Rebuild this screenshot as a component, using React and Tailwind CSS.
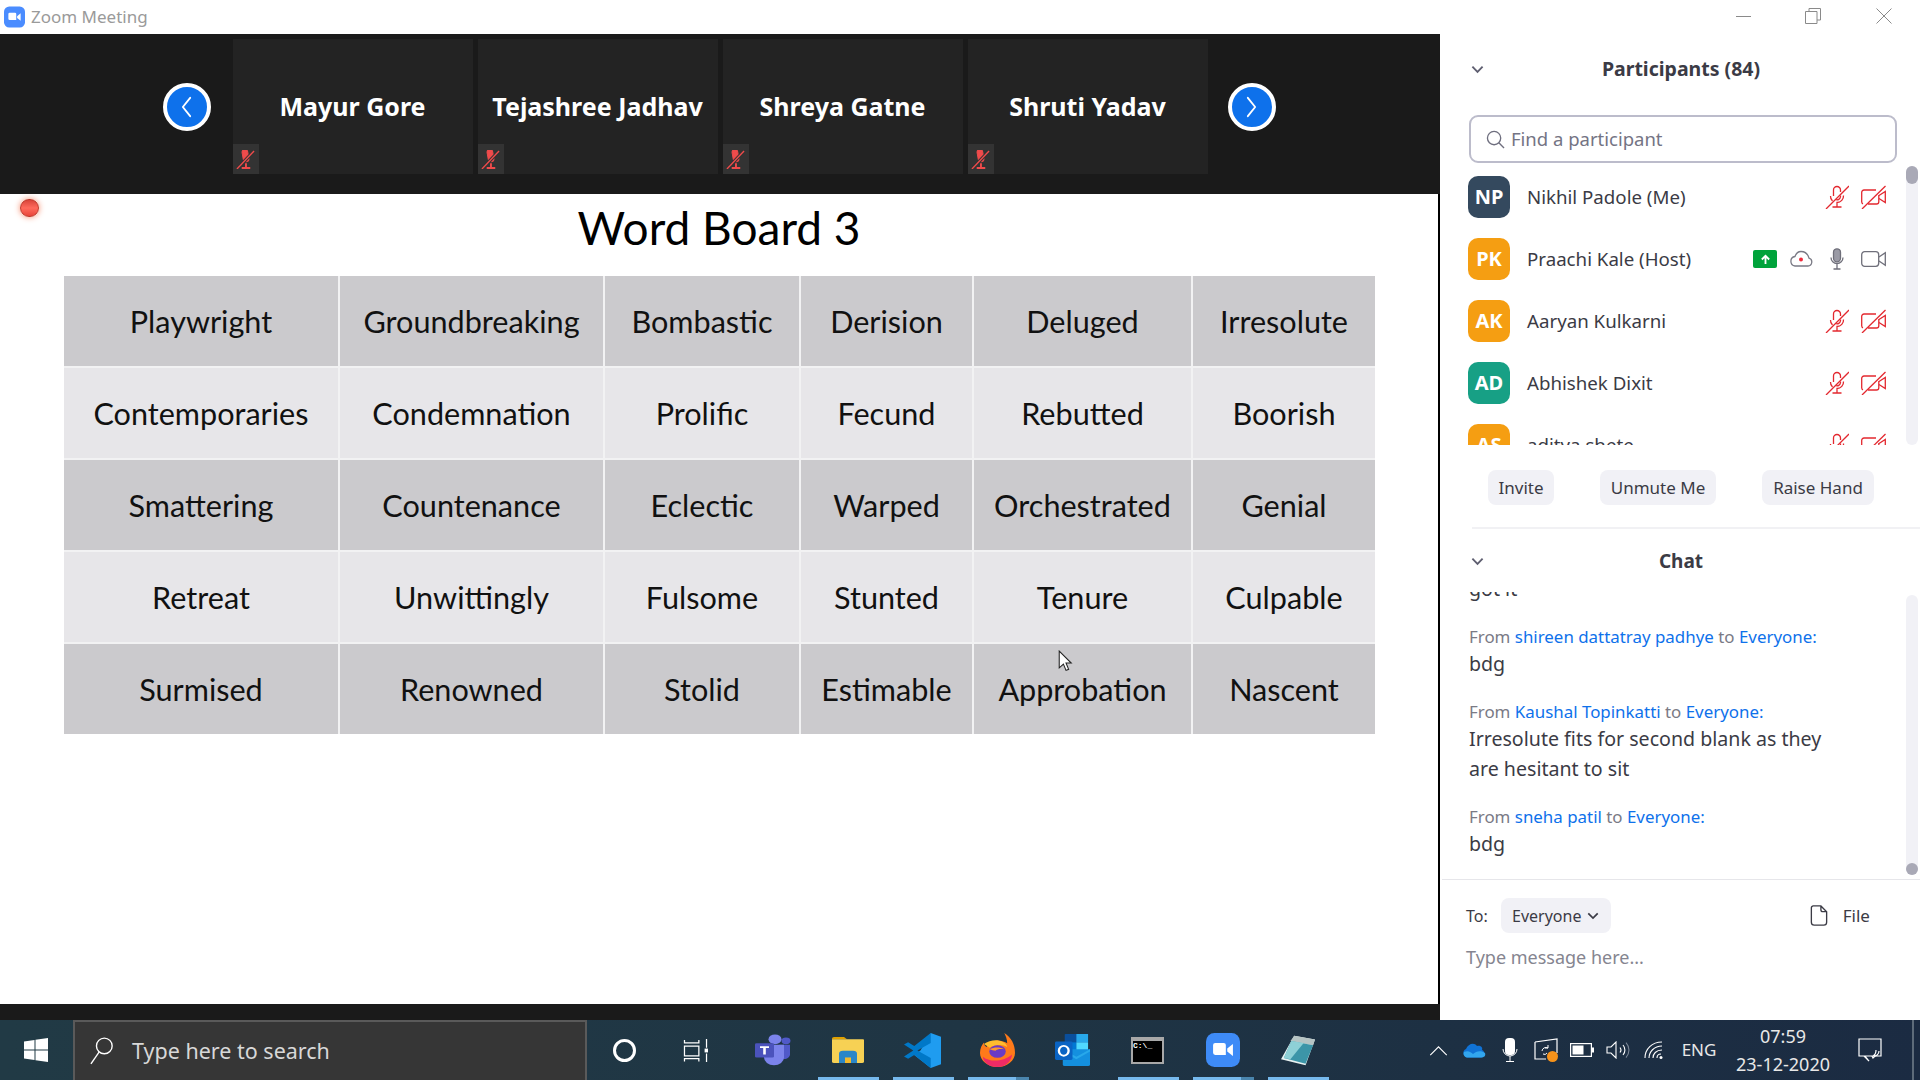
import React from 'react';

const words = [
    ['Playwright', 'Groundbreaking', 'Bombastic', 'Derision', 'Deluged', 'Irresolute'],
    ['Contemporaries', 'Condemnation', 'Prolific', 'Fecund', 'Rebutted', 'Boorish'],
    ['Smattering', 'Countenance', 'Eclectic', 'Warped', 'Orchestrated', 'Genial'],
    ['Retreat', 'Unwittingly', 'Fulsome', 'Stunted', 'Tenure', 'Culpable'],
    ['Surmised', 'Renowned', 'Stolid', 'Estimable', 'Approbation', 'Nascent'],
];

const tiles = ['Mayur Gore', 'Tejashree Jadhav', 'Shreya Gatne', 'Shruti Yadav'];

const people = [
    { initials: 'NP', name: 'Nikhil Padole (Me)', color: 'bg-[#34495e]' },
    { initials: 'PK', name: 'Praachi Kale (Host)', color: 'bg-[#f59e12]', host: true },
    { initials: 'AK', name: 'Aaryan Kulkarni', color: 'bg-[#f59e12]' },
    { initials: 'AD', name: 'Abhishek Dixit', color: 'bg-[#17a085]' },
    { initials: 'AS', name: 'aditya shete', color: 'bg-[#f59e12]' },
];

const messages = [
    { from: 'shireen dattatray padhye', lines: ['bdg'] },
    { from: 'Kaushal Topinkatti', lines: ['Irresolute fits for second blank as they', 'are hesitant to sit'] },
    { from: 'sneha patil', lines: ['bdg'] },
];

function MicOff({ className }) {
    return (
        <svg viewBox="0 0 24 24" className={className} fill="none" stroke="currentColor" strokeWidth="1.3">
            <path d="M8.5 11V5a3.5 3.5 0 0 1 7 0v2M15.5 10.5v1a3.5 3.5 0 0 1-5 3" />
            <path d="M5.5 11a6.5 6.5 0 0 0 2 5M18.5 10.5a6.5 6.5 0 0 1-6.5 7v4M7.5 22h9" />
            <path d="M1 24 24 1" />
        </svg>
    );
}

function VideoOff({ className }) {
    return (
        <svg viewBox="0 0 25 24" className={className} fill="none" stroke="currentColor" strokeWidth="1.3">
            <path d="M15 5H3a2.3 2.3 0 0 0-2.3 2.3v9.4c0 1 .5 1.8 1.3 2.1M7 19h8.5a2.3 2.3 0 0 0 2.300-2.300V10" />
            <path d="m18 10.5 6.300-4v11l-6.300-4" />
            <path d="M1 24 24.500 1" />
        </svg>
    );
}

function TileMute() {
    return (
        <svg viewBox="0 0 20 20" className="w-[19px] h-[19px] text-[#ef4b4b]" fill="none" stroke="currentColor">
            <path d="M7 2.5a3 3 0 0 1 6 0v7a3 3 0 0 1-6 0z" fill="currentColor" strokeWidth="1" transform="rotate(-10 10 6)" />
            <path d="M10.500 14v5M6 19h9" strokeWidth="2" />
            <path d="M3 18 19 1" stroke="#333333" strokeWidth="3.500" />
            <path d="M1 20 19 1" strokeWidth="1.400" />
        </svg>
    );
}

function ZoomGlyph({ className, bg }) {
    return (
        <svg viewBox="0 0 24 24" className={className}>
            <rect x="0" y="0" width="24" height="24" rx="6" fill={bg} />
            <path d="M5 8.500A1.500 1.500 0 0 1 6.500 7h6A1.500 1.500 0 0 1 14 8.500v7h-7.500A1.500 1.500 0 0 1 5 14z" fill="#fff" />
            <path d="m15 11 4-3.300v8.600L15 13z" fill="#fff" />
        </svg>
    );
}

function Chevron({ className }) {
    return (
        <svg viewBox="0 0 14 9" className={className} fill="none" stroke="currentColor" strokeWidth="2">
            <path d="m1.500 1.500 5.500 5.500 5.500-5.500" />
        </svg>
    );
}

function NavArrow({ left }) {
    return (
        <div className="w-[48px] h-[48px] rounded-full bg-[#0e71eb] border-[4px] border-white flex items-center justify-center">
            <svg viewBox="0 0 14 24" className="w-[13px] h-[22px]" fill="none" stroke="#fff" strokeWidth="2" strokeLinecap="round" strokeLinejoin="round">
                <path d={left ? 'M11 2 3 12l8 10' : 'M3 2l8 10-8 10'} />
            </svg>
        </div>
    );
}

function Person({ p }) {
    return (
        <div className="flex items-center h-[62px] shrink-0 pl-[28px] pr-[20px]">
            <div className={`w-[42px] h-[42px] rounded-[10px] ${p.color} flex items-center justify-center text-white font-bold text-[20px]`}>
                {p.initials}
            </div>
            <span className="ml-[17px] text-[18.700px] text-[#3b3b45]">{p.name}</span>
            {p.host ? (
                <div className="ml-auto flex items-center">
                    <div className="w-[24px] h-[18px] bg-[#00a33b] rounded-[2px] flex items-center justify-center">
                        <svg viewBox="0 0 12 12" className="w-[11px] h-[11px]" fill="none" stroke="#fff" strokeWidth="2">
                            <path d="M6 11V2M2 6l4-4 4 4" />
                        </svg>
                    </div>
                    <svg viewBox="0 0 24 18" className="ml-[12px] w-[24px] h-[18px]" fill="none" stroke="#7a7a85" strokeWidth="1.3">
                        <path d="M6 16h13a4 4 0 0 0 1-7.800C19 4.500 16 1.500 12 1.500 9 1.500 7 3.500 6 6.500a4.800 4.800 0 0 0 0 9.500z" />
                        <circle cx="12" cy="9.500" r="2" fill="#f02b3c" stroke="none" />
                    </svg>
                    <svg viewBox="0 0 14 22" className="ml-[17px] w-[14px] h-[22px]" fill="none" stroke="#6f6f7a" strokeWidth="1.3">
                        <rect x="3.500" y="0.800" width="7" height="13" rx="3.500" fill="#9a9aa5" />
                        <path d="M1 9.500a6 6 0 0 0 12 0M7 15.500v5M3.500 21h7" />
                    </svg>
                    <svg viewBox="0 0 25 16" className="ml-[17px] w-[25px] h-[16px]" fill="none" stroke="#6f6f7a" strokeWidth="1.3">
                        <rect x="0.700" y="0.700" width="17" height="14.600" rx="3" />
                        <path d="m18 6 6.300-4.300v12.600L18 10" />
                    </svg>
                </div>
            ) : (
                <div className="ml-auto flex items-center text-[#e3282f]">
                    <MicOff className="w-[24px] h-[24px]" />
                    <VideoOff className="ml-[12px] w-[25px] h-[24px]" />
                </div>
            )}
        </div>
    );
}

function Message({ from, lines }) {
    return (
        <div>
            <div className="text-[16.900px] leading-[24px] text-[#7a7a85]">
                From <span className="text-[#0e71eb]">{from}</span> to <span className="text-[#0e71eb]">Everyone:</span>
            </div>
            {lines.map((l) => (
                <div key={l} className="text-[19.600px] leading-[30px] text-[#3b3b45]">{l}</div>
            ))}
        </div>
    );
}

function Slot({ children, bar, stacked, className = 'w-[75px]' }) {
    return (
        <div className={`relative h-full flex items-center justify-center shrink-0 ${className}`}>
            {children}
            {bar && (
                <div className="absolute bottom-0 left-[8px] h-[3px] w-[61px] flex">
                    <div className="flex-1 bg-[#76b9ed]"></div>
                    {stacked && <div className="w-[13px] bg-[#4a85ad]"></div>}
                </div>
            )}
        </div>
    );
}

function Taskbar() {
    return (
        <div className="h-[60px] shrink-0 flex items-stretch bg-gradient-to-r from-[#213a45] via-[#1f3544] to-[#1b2b42] text-white font-['Noto_Sans']">
            <div className="w-[73px] flex items-center justify-center pr-[2px]">
                <svg viewBox="0 0 24 24" className="w-[24px] h-[24px]" fill="#fff">
                    <path d="M0 3.500 10.500 2v9.500H0zM11.500 1.800 24 0v11.500H11.500zM0 12.500h10.500V22L0 20.500zM11.500 12.500H24V24l-12.500-1.800z" />
                </svg>
            </div>
            <div className="w-[514px] bg-[#363636] border-2 border-[#5a5a5a] border-b-0 flex items-center">
                <svg viewBox="0 0 26 32" className="ml-[15px] w-[24px] h-[30px]" fill="none" stroke="#fff" strokeWidth="1.5">
                    <circle cx="15.500" cy="10.500" r="8.500" />
                    <path d="M10 17 1 30" />
                </svg>
                <span className="ml-[18px] mt-[1px] text-[21.500px] text-[#d8d8d8]">Type here to search</span>
            </div>

            <Slot>
                <div className="w-[23px] h-[23px] rounded-full border-[3px] border-white"></div>
            </Slot>
            <Slot className="w-[66px]">
                <svg viewBox="0 0 25 24" className="w-[25px] h-[23px]" fill="none" stroke="#fff" strokeWidth="1.3">
                    <path d="M1 1v3h15V1M1 7.500h15v10H1zM1 23.500v-3h15v3M24 0v9M24 15v9" />
                    <rect x="22" y="10" width="4" height="4" fill="#fff" stroke="none" />
                </svg>
            </Slot>
            <Slot className="w-[75px] ml-[7px]">
                <svg viewBox="0 0 36 42" preserveAspectRatio="none" className="w-[36px] h-[32px]">
                    <circle cx="20" cy="7" r="6.500" fill="#7b83eb" />
                    <circle cx="31" cy="9" r="4.500" fill="#5059c9" />
                    <path d="M24 14h11v13a6 6 0 0 1-9 5z" fill="#5059c9" />
                    <path d="M9 14h20v17a10 10 0 0 1-20 0z" fill="#7b83eb" />
                    <rect x="0" y="12" width="19" height="19" rx="1.500" fill="#4b53bc" />
                    <path d="M5 16h9v2.500h-3.200V27H8.200v-8.500H5z" fill="#fff" />
                </svg>
            </Slot>
            <Slot bar>
                <svg viewBox="0 0 32 34" preserveAspectRatio="none" className="w-[32px] h-[26px]">
                    <path d="M0 2a2 2 0 0 1 2-2h10l3 3h-15z" fill="#e0a100" />
                    <path d="M0 3h31a1 1 0 0 1 1 1v28a2 2 0 0 1-2 2H2a2 2 0 0 1-2-2z" fill="#f7d154" />
                    <path d="M7 34V22a4 4 0 0 1 4-4h10a4 4 0 0 1 4 4v12h-6v-7h-6v7z" fill="#2a86c8" />
                    <rect x="13" y="27" width="6" height="7" fill="#f2b92c" />
                </svg>
            </Slot>
            <Slot bar>
                <svg viewBox="0 0 36 46" preserveAspectRatio="none" className="w-[37px] h-[35px]">
                    <path d="M26 0 36 5v36l-10 5-16-17 6-6z" fill="#1f9cf0" />
                    <path d="M26 0v13L13 23l13 10v13L10 29 4 34 0 31l9-8-9-8 4-3 6 5z" fill="#0078c8" />
                </svg>
            </Slot>
            <Slot bar stacked>
                <svg viewBox="0 0 36 46" preserveAspectRatio="none" className="w-[35px] h-[34px]">
                    <path d="M18 46C8 46 0 37 0 27c0-6 2-11 4-14 0 3 1 5 3 6 1-5 5-9 11-9 4 0 8 2 10 4 0-6-2-11-3-14 7 6 11 15 11 27 0 10-8 19-18 19z" fill="#ff7a1a" />
                    <path d="M18 46C9 46 3 39 3 32c6 7 20 8 30-3-1 10-7 17-15 17z" fill="#ef2b66" />
                    <path d="M4 15c4-4 10-6 15-5 5 1 9 5 9 9-4-4-13-4-18 1z" fill="#ffbd2e" />
                    <circle cx="18" cy="25" r="8.500" fill="#6a3bc4" />
                    <path d="M10 22c4-3 11-3 15 0-4-1-8 0-9 2-2 0-4-1-6-2z" fill="#ff9a2e" />
                </svg>
            </Slot>
            <Slot>
                <svg viewBox="0 0 36 42" preserveAspectRatio="none" className="w-[35px] h-[32px]">
                    <rect x="10" y="0" width="24" height="22" rx="1" fill="#0a4f9c" />
                    <rect x="22" y="0" width="12" height="11" fill="#28a8ea" />
                    <rect x="10" y="11" width="12" height="11" fill="#0078d4" />
                    <rect x="22" y="11" width="12" height="11" fill="#50d9ff" />
                    <path d="M8 20h28v20a2 2 0 0 1-2 2H10a2 2 0 0 1-2-2z" fill="#1490df" />
                    <path d="M8 20l14 10 14-10v3L22 33 8 23z" fill="#28a8ea" />
                    <rect x="0" y="10" width="18" height="24" rx="1.500" fill="#0a64c4" />
                    <ellipse cx="9" cy="22" rx="5" ry="6.500" fill="none" stroke="#fff" strokeWidth="2.400" />
                </svg>
            </Slot>
            <Slot bar>
                <div className="w-[33px] h-[27px] bg-black border-2 border-[#a8a8a8] border-t-[4px] overflow-hidden">
                    <div className="text-[8px] leading-[9px] font-bold text-white font-['Liberation_Mono']">C:\_</div>
                </div>
            </Slot>
            <Slot bar stacked>
                <ZoomGlyph className="w-[34px] h-[34px]" bg="#3e8bf7" />
            </Slot>
            <Slot bar>
                <svg viewBox="0 0 36 42" preserveAspectRatio="none" className="w-[34px] h-[31px]">
                    <path d="M14 1 36 6 26 41 0 33z" fill="#e8f2f2" />
                    <path d="M14 1 36 6 34 14 10 8z" fill="#b6c4c4" />
                    <path d="M11 8 34 14 26 39 3 31z" fill="#3c95a8" />
                    <path d="M11 8 24 11 10 33 3 31z" fill="#8ed0d6" />
                </svg>
            </Slot>

            <div className="ml-auto flex items-stretch">
                <Slot className="w-[36px]">
                    <svg viewBox="0 0 20 12" className="w-[19px] h-[11px]" fill="none" stroke="#fff" strokeWidth="1.2">
                        <path d="m1 11 9-9 9 9" />
                    </svg>
                </Slot>
                <Slot className="w-[36px]">
                    <svg viewBox="0 0 24 16" className="w-[24px] h-[16px]">
                        <path d="M5 15.500A4.500 4.500 0 0 1 4 7C6 2 12 0 15 4c4-1 6 2 5 4 3 1 4 7-1 7.500z" fill="#1073d6" />
                        <path d="M5 15.500C2 15 1 12 2 10c4-2 7 0 9 2 3-3 8-4 12-1 1 3-1 4.500-4 4.500z" fill="#32a6ee" />
                    </svg>
                </Slot>
                <Slot className="w-[36px]">
                    <svg viewBox="0 0 16 24" className="w-[16px] h-[24px]" fill="none" stroke="#fff" strokeWidth="1">
                        <rect x="3" y="0" width="10" height="17" rx="4" fill="#fff" stroke="none" />
                        <path d="M1 11a7 7 0 0 0 14 0M8 18v5M4 23.500h8" />
                    </svg>
                </Slot>
                <Slot className="w-[36px]">
                    <svg viewBox="0 0 24 24" className="w-[24px] h-[24px]">
                        <path d="M1 4 23 1v14M1 4v17h11" fill="none" stroke="#fff" strokeWidth="1.2" />
                        <path d="M8 13a4 4 0 0 1 6-3M14 7v3h-3M13 15a3 3 0 0 1-4 1" fill="none" stroke="#fff" strokeWidth="1" />
                        <circle cx="18.500" cy="18.500" r="5.500" fill="#f7931a" />
                    </svg>
                </Slot>
                <Slot className="w-[36px]">
                    <svg viewBox="0 0 24 14" className="w-[24px] h-[14px]">
                        <rect x="0.600" y="0.600" width="20.800" height="12.800" fill="none" stroke="#fff" strokeWidth="1.2" />
                        <rect x="2.500" y="2.500" width="11" height="9" fill="#fff" />
                        <rect x="22" y="4.500" width="2" height="5" fill="#fff" />
                    </svg>
                </Slot>
                <Slot className="w-[36px]">
                    <svg viewBox="0 0 24 18" className="w-[24px] h-[18px]" fill="none" stroke="#fff" strokeWidth="1.1">
                        <path d="M1 6v6h4l5 5V1L5 6z" />
                        <path d="M14 6.500a4 4 0 0 1 0 5M17 4a7.500 7.500 0 0 1 0 10" />
                        <path d="M20 1.500a11 11 0 0 1 0 15" stroke="#7a8595" />
                    </svg>
                </Slot>
                <Slot className="w-[36px]">
                    <svg viewBox="0 0 20 18" className="w-[20px] h-[18px]" fill="none" stroke="#fff" strokeWidth="1.1">
                        <path d="M1 17C1 8 8 1 18 1M5 17c0-6 5-12 13-12M9 17c0-4 3-8 9-8M13 17c0-2 1-4 4-4" />
                        <circle cx="17" cy="16.500" r="1.500" fill="#fff" stroke="none" />
                    </svg>
                </Slot>
                <div className="w-[54px] flex items-center justify-center text-[17px] text-[#e8e8e8]">ENG</div>
                <div className="w-[114px] flex flex-col items-center justify-center text-[18px] leading-[28px] text-[#e8e8e8]">
                    <div>07:59</div>
                    <div>23-12-2020</div>
                </div>
                <div className="w-[60px] flex items-center justify-center">
                    <svg viewBox="0 0 24 24" className="w-[24px] h-[24px]" fill="none" stroke="#fff" strokeWidth="1.2">
                        <path d="M1 1h22v17h-6l-1 1-1 1-1-2H7l4 5-5-5H1z" />
                        <path d="M21 13a5 5 0 0 1-6 5c2-1 3-3 3-6" />
                    </svg>
                </div>
                <div className="w-[2px] ml-[12px] mr-[6px] bg-[#5d6b7a]"></div>
            </div>
        </div>
    );
}

export default function App() {
    return (
        <div className="w-[1920px] h-[1080px] flex flex-col overflow-hidden bg-white font-['Noto_Sans']">
            <div className="flex flex-1 min-h-0">
                {/* meeting side */}
                <div className="w-[1440px] flex flex-col">
                    <div className="h-[34px] flex items-center pl-[4px]">
                        <ZoomGlyph className="w-[21px] h-[22px]" bg="#4a8cff" />
                        <span className="ml-[6px] text-[17px] text-[#9a9a9a]">Zoom Meeting</span>
                    </div>
                    <div className="h-[160px] bg-[#1a1a1a] pt-[5px]">
                        <div className="h-[135px] flex items-center justify-center pr-[2px]">
                            <NavArrow left />
                            <div className="flex gap-[5px] ml-[22px] mr-[20px] h-full">
                                {tiles.map((t) => (
                                    <div key={t} className="relative w-[240px] h-full bg-[#232323] flex items-center justify-center">
                                        <span className="text-white font-bold text-[25px]">{t}</span>
                                        <div className="absolute left-0 bottom-0 w-[26px] h-[30px] bg-[#333333] flex items-center justify-center">
                                            <TileMute />
                                        </div>
                                    </div>
                                ))}
                            </div>
                            <NavArrow />
                        </div>
                    </div>
                    <div className="relative flex-1 border-r-2 border-black flex flex-col">
                        <div className="absolute left-[20px] top-[5px] w-[19px] h-[18px] rounded-full bg-gradient-to-b from-[#d8443a] via-[#ff6a5c] to-[#e8453a] border border-[#c0392b] shadow-[0_0_6px_#f58a6a]"></div>
                        <h1 className="h-[82px] pb-[16px] flex items-center justify-center text-[46px] text-black font-['Lato']">Word Board 3</h1>
                        <div className="ml-[64px] w-[1311px] grid grid-cols-[274px_263px_194px_171px_217px_182px] gap-[2px] bg-[#f2f2f3] font-['Lato'] text-[30.600px] text-[#111]">
                            {words.map((row, i) =>
                                row.map((w) => (
                                    <div
                                        key={w}
                                        className={`h-[90px] pt-[2px] flex items-center justify-center ${i % 2 === 0 ? 'bg-[#cbcacd]' : 'bg-[#e7e6e9]'}`}
                                    >
                                        {w}
                                    </div>
                                ))
                            )}
                        </div>
                        <svg viewBox="0 0 14 22" className="absolute left-[1058px] top-[456px] w-[15px] h-[23px]" fill="#fff" stroke="#222" strokeWidth="1">
                            <path d="M1 1v16l4-3.500 2.500 6 2.500-1-2.500-6h5z" />
                        </svg>
                    </div>
                    <div className="h-[16px] bg-[#1a1a1a]"></div>
                </div>

                {/* side panel */}
                <div className="w-[480px] flex flex-col">
                    <div className="h-[34px] flex items-center text-[#8a8a8a]">
                        <div className="ml-[296px] w-[15px] h-px bg-[#8a8a8a] -mt-[2px]"></div>
                        <svg viewBox="0 0 16 16" className="ml-[54px] w-[16px] h-[16px] -mt-[2px]" fill="none" stroke="currentColor">
                            <path d="M.5 3.500h11.500v12H.5zM4 3.500V.5h11.500v11.500H12" />
                        </svg>
                        <svg viewBox="0 0 16 16" className="ml-[55px] w-[16px] h-[16px] -mt-[2px]" fill="none" stroke="currentColor">
                            <path d="m.5.5 15 15M15.500.5l-15 15" />
                        </svg>
                    </div>
                    <div className="relative h-[70px] flex items-center justify-center pl-[2px] text-[19.500px] font-bold text-[#3b3b45]">
                        <Chevron className="absolute left-[31px] top-[31px] w-[13px] h-[9px] text-[#5e5e70]" />
                        Participants (84)
                    </div>
                    <div className="mt-[11px] ml-[29px] w-[428px] h-[48px] shrink-0 rounded-[9px] border-2 border-[#bcbccb] flex items-center pl-[15px]">
                        <svg viewBox="0 0 20 20" className="w-[19px] h-[19px]" fill="none" stroke="#6e6e7e" strokeWidth="1.4">
                            <circle cx="8.500" cy="8.500" r="7" />
                            <path d="m13.500 13.500 5.500 5.500" />
                        </svg>
                        <span className="ml-[6px] text-[18.500px] text-[#747484]">Find a participant</span>
                    </div>
                    <div className="mt-[3px] h-[279px] shrink-0 flex">
                        <div className="w-[466px] overflow-hidden flex flex-col">
                            {people.map((p) => (
                                <Person key={p.initials} p={p} />
                            ))}
                        </div>
                        <div className="w-[12px] h-full rounded-full bg-[#f1f1f6]">
                            <div className="h-[18px] rounded-full bg-[#a9a9b6]"></div>
                        </div>
                    </div>
                    <div className="mt-[25px] h-[35px] shrink-0 flex text-[17px] text-[#3b3b45]">
                        <div className="ml-[48px] w-[66px] rounded-[8px] bg-[#f1f1f6] flex items-center justify-center">Invite</div>
                        <div className="ml-[46px] w-[116px] rounded-[8px] bg-[#f1f1f6] flex items-center justify-center">Unmute Me</div>
                        <div className="ml-[46px] w-[112px] rounded-[8px] bg-[#f1f1f6] flex items-center justify-center">Raise Hand</div>
                    </div>
                    <div className="mt-[22px] ml-[32px] h-[2px] shrink-0 bg-[#f1f1f4]"></div>
                    <div className="relative h-[63px] shrink-0 flex items-center justify-center pl-[2px] pt-[2px] text-[19px] font-bold text-[#3b3b45]">
                        <Chevron className="absolute left-[31px] top-[28px] w-[13px] h-[9px] text-[#5e5e70]" />
                        Chat
                    </div>
                    <div className="h-[287px] shrink-0 flex">
                        <div className="w-[466px] overflow-hidden flex flex-col justify-end gap-[21px] pl-[29px] pb-[20px]">
                            <div className="text-[19.600px] leading-[30px] text-[#3b3b45]">got it</div>
                            {messages.map((m) => (
                                <Message key={m.from} from={m.from} lines={m.lines} />
                            ))}
                        </div>
                        <div className="w-[12px] mt-[3px] mb-[4px] rounded-full bg-[#f1f1f6] flex flex-col justify-end">
                            <div className="h-[12px] rounded-full bg-[#a9a9b6]"></div>
                        </div>
                    </div>
                    <div className="ml-[2px] h-px shrink-0 bg-[#e6e6ea]"></div>
                    <div className="mt-[18px] h-[35px] shrink-0 flex items-center text-[16px] text-[#3b3b45]">
                        <span className="ml-[26px]">To:</span>
                        <div className="ml-[13px] w-[110px] h-full rounded-[8px] bg-[#f1f1f6] flex items-center justify-center gap-[6px]">
                            Everyone
                            <Chevron className="w-[12px] h-[8px]" />
                        </div>
                        <svg viewBox="0 0 18 22" className="ml-[199px] w-[18px] h-[21px]" fill="none" stroke="#3b3b45" strokeWidth="1.4">
                            <path d="M3 1h8l6 6v11a3 3 0 0 1-3 3H4a3 3 0 0 1-3-3V3a2 2 0 0 1 2-2zM11 1v4a2 2 0 0 0 2 2h4" />
                        </svg>
                        <span className="ml-[15px] text-[17px]">File</span>
                    </div>
                    <div className="mt-[11px] ml-[26px] text-[18px] text-[#858590]">Type message here...</div>
                </div>
            </div>
            <Taskbar />
        </div>
    );
}
